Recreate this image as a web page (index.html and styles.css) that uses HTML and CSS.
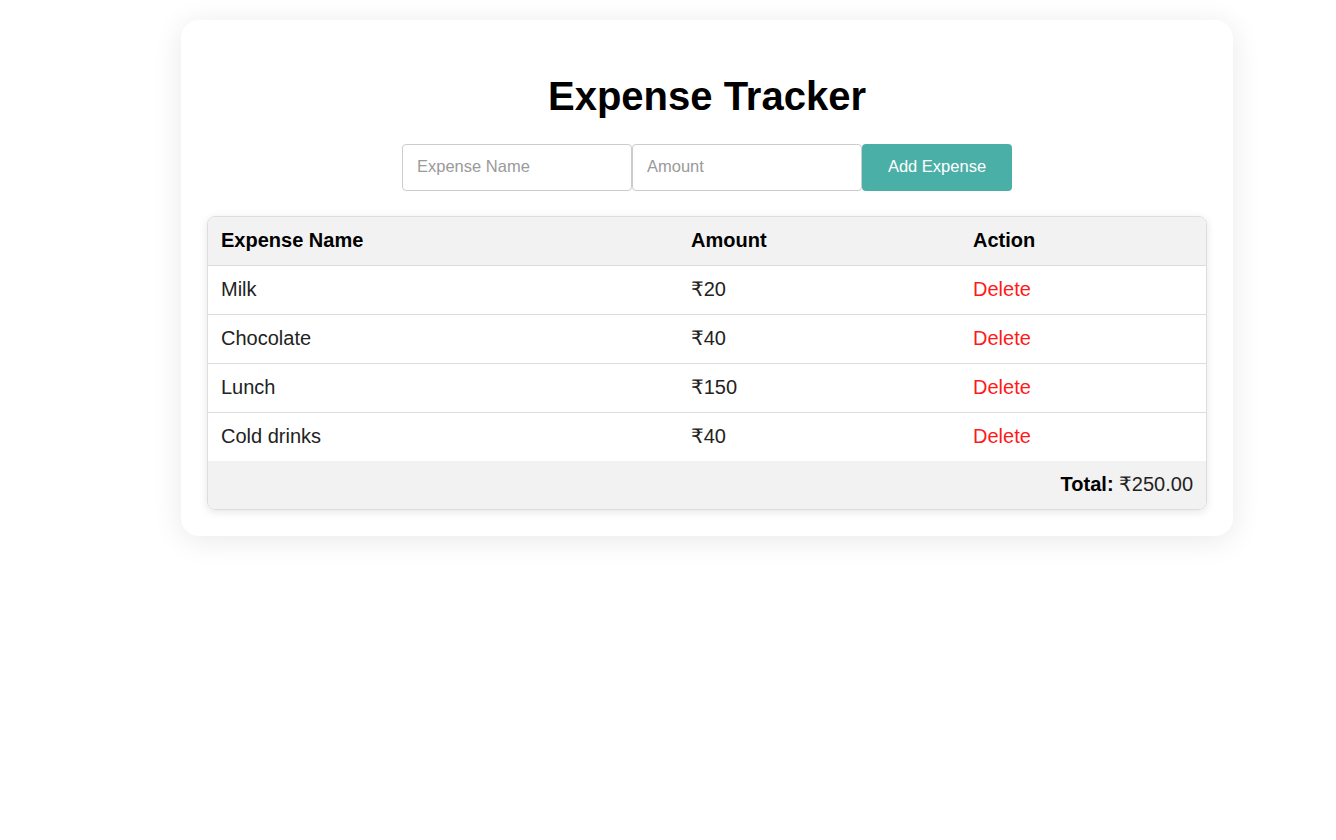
FILE: index.html
```
<!DOCTYPE html>
<html lang="en">
<head>
<meta charset="utf-8">
<title>Expense Tracker</title>
<link rel="stylesheet" href="styles.css">
</head>
<body>
<div class="card">
  <h1 class="title">Expense Tracker</h1>
  <form class="add-form" onsubmit="return false">
    <input class="field" type="text" placeholder="Expense Name">
    <input class="field" type="number" placeholder="Amount">
    <button class="add-btn" type="submit">Add Expense</button>
  </form>
  <div class="table-wrap">
    <table class="expenses">
      <thead>
        <tr><th class="c-name">Expense Name</th><th class="c-amt">Amount</th><th class="c-act">Action</th></tr>
      </thead>
      <tbody>
        <tr><td>Milk</td><td>₹20</td><td><span class="del">Delete</span></td></tr>
        <tr><td>Chocolate</td><td>₹40</td><td><span class="del">Delete</span></td></tr>
        <tr><td>Lunch</td><td>₹150</td><td><span class="del">Delete</span></td></tr>
        <tr><td>Cold drinks</td><td>₹40</td><td><span class="del">Delete</span></td></tr>
      </tbody>
      <tfoot>
        <tr><td colspan="3" class="total"><strong>Total:</strong> ₹250.00</td></tr>
      </tfoot>
    </table>
  </div>
</div>
</body>
</html>
```
FILE: styles.css
```
html, body {
  margin: 0;
  padding: 0;
  background: #fff;
  font-family: "Liberation Sans", Arial, "DejaVu Sans", sans-serif;
}
body {
  padding: 20px 0 60px;
}
.card {
  box-sizing: border-box;
  width: 1052px;
  margin-left: 181px;
  padding: 28px 26px 26px;
  background: #fff;
  border-radius: 18px;
  box-shadow: 0 4px 30px rgba(0, 0, 0, 0.09);
}
.title {
  margin: 26px 0 25px;
  text-align: center;
  font-size: 40px;
  font-weight: bold;
  line-height: 45px;
  color: #000;
}
.add-form {
  display: flex;
  justify-content: center;
  margin: 0 0 25px;
}
.field {
  box-sizing: border-box;
  width: 230px;
  height: 47px;
  padding: 0 14px 2px;
  border: 1px solid #ccc;
  border-radius: 4px;
  font-family: inherit;
  font-size: 16.5px;
  color: #222;
  outline: none;
  margin: 0;
  -moz-appearance: textfield;
}
.field::-webkit-outer-spin-button,
.field::-webkit-inner-spin-button { -webkit-appearance: none; margin: 0; }
.field::placeholder { color: #9a9a9a; }
.add-btn {
  box-sizing: border-box;
  width: 150px;
  height: 47px;
  padding: 0 0 2px;
  border: none;
  border-radius: 4px;
  background: #4aafa6;
  color: #fff;
  font-family: inherit;
  font-size: 16.5px;
  margin: 0;
  cursor: pointer;
}
.table-wrap {
  border: 1px solid #ddd;
  border-radius: 8px;
  overflow: hidden;
  box-shadow: 0 2px 8px rgba(0, 0, 0, 0.1);
}
.expenses {
  width: 100%;
  border-collapse: collapse;
  font-size: 20px;
}
.expenses th,
.expenses td {
  padding: 11px 13px 13px;
  line-height: 24px;
  text-align: left;
}
.expenses th {
  background: #f2f2f2;
  color: #000;
  font-weight: bold;
  border-bottom: 1px solid #ddd;
}
.expenses tbody td {
  color: #222;
  border-bottom: 1px solid #ddd;
}
.expenses tbody tr:last-child td { border-bottom: none; }
.c-name { width: 444px; }
.c-amt { width: 256px; }
.del { color: #ff1a1a; cursor: pointer; }
.expenses tfoot td.total {
  background: #f2f2f2;
  text-align: right;
  color: #222;
}
.total strong { color: #000; }
```
